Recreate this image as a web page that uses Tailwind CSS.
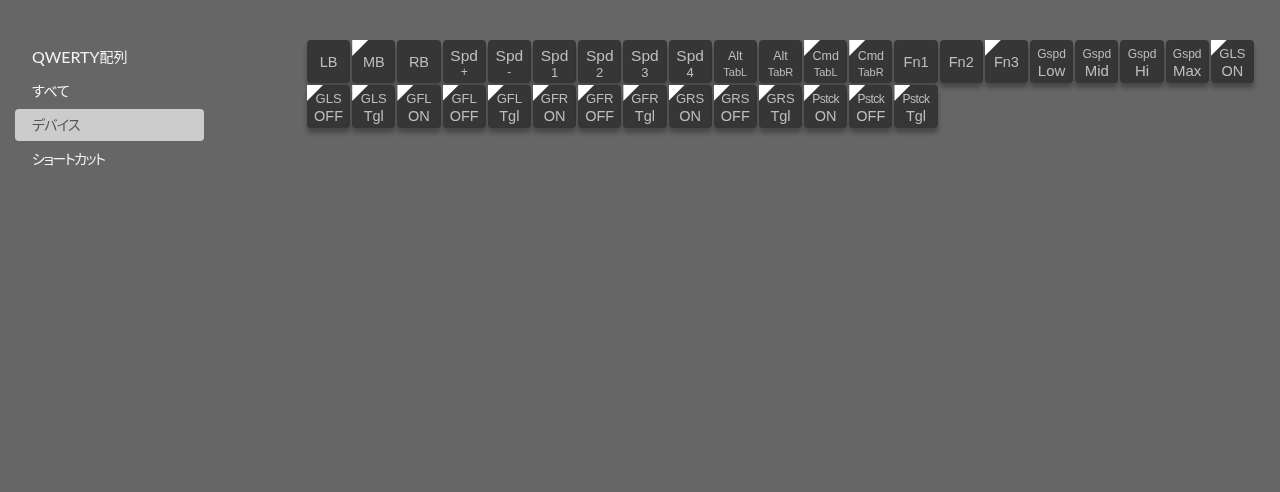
<!doctype html>
<html lang="ja"><head><meta charset="utf-8"><script src="https://cdn.jsdelivr.net/npm/@tailwindcss/browser@4"></script></head>
<body class="h-[492px] w-[1280px] overflow-hidden bg-[#666666] font-['Lato','Noto_Sans_CJK_JP',sans-serif]">
<div class="flex h-full">
<nav class="ml-[15px] mt-[41px] flex w-[188.5px] shrink-0 flex-col gap-[2px] text-[14px] leading-[20px] [font-feature-settings:'palt'] blur-[0.2px]">
<div class="flex h-[32px] items-center rounded-[4px] pl-[17px] text-[#f2f2f2]"><span class="text-[16px]">QWERTY</span>配列</div>
<div class="flex h-[32px] items-center rounded-[4px] pl-[17px] tracking-[-0.3px] text-[#f2f2f2]">すべて</div>
<div class="flex h-[32px] items-center rounded-[4px] bg-[#cccccc] pl-[17px] tracking-[-0.8px] text-[#555555]">デバイス</div>
<div class="flex h-[32px] items-center rounded-[4px] pl-[17px] tracking-[-1.45px] text-[#f2f2f2]">ショートカット</div>
</nav>
<main class="ml-[103.5px] mt-[40px] flex h-[90px] w-[960px] flex-wrap content-start gap-[2px] font-['Liberation_Sans',sans-serif] text-[#bdbdbd] blur-[0.4px] *:relative *:flex *:h-[43px] *:w-[43.2px] *:flex-col *:items-center *:justify-center *:rounded-[4px] *:bg-[#363636] *:pt-[3px] *:shadow-[0_5px_5px_rgba(0,0,0,0.3)]">
<div class="pb-[3px] text-[14.5px] leading-[16px]">LB</div>
<div class="pb-[3px] text-[14.5px] leading-[16px]"><i class="absolute left-0 top-0 size-[16px] bg-white [clip-path:polygon(0_0,100%_0,0_100%)]"></i>MB</div>
<div class="pb-[3px] text-[14.5px] leading-[16px]">RB</div>
<div><span class="text-[15.5px] leading-[18px]">Spd</span><span class="text-[12px] leading-[15px]">+</span></div>
<div><span class="text-[15.5px] leading-[18px]">Spd</span><span class="text-[12px] leading-[15px]">-</span></div>
<div><span class="text-[15.5px] leading-[18px]">Spd</span><span class="text-[13px] leading-[15px]">1</span></div>
<div><span class="text-[15.5px] leading-[18px]">Spd</span><span class="text-[13px] leading-[15px]">2</span></div>
<div><span class="text-[15.5px] leading-[18px]">Spd</span><span class="text-[13px] leading-[15px]">3</span></div>
<div><span class="text-[15.5px] leading-[18px]">Spd</span><span class="text-[13px] leading-[15px]">4</span></div>
<div><span class="text-[12.5px] leading-[18px]">Alt</span><span class="text-[11px] leading-[15px]">TabL</span></div>
<div><span class="text-[12.5px] leading-[18px]">Alt</span><span class="text-[11px] leading-[15px]">TabR</span></div>
<div><i class="absolute left-0 top-0 size-[16px] bg-white [clip-path:polygon(0_0,100%_0,0_100%)]"></i><span class="text-[12.5px] leading-[18px]">Cmd</span><span class="text-[11px] leading-[15px]">TabL</span></div>
<div><i class="absolute left-0 top-0 size-[16px] bg-white [clip-path:polygon(0_0,100%_0,0_100%)]"></i><span class="text-[12.5px] leading-[18px]">Cmd</span><span class="text-[11px] leading-[15px]">TabR</span></div>
<div class="pb-[3px] text-[14.5px] leading-[16px]">Fn1</div>
<div class="pb-[3px] text-[14.5px] leading-[16px]">Fn2</div>
<div class="pb-[3px] text-[14.5px] leading-[16px]"><i class="absolute left-0 top-0 size-[16px] bg-white [clip-path:polygon(0_0,100%_0,0_100%)]"></i>Fn3</div>
<div><span class="text-[12px] leading-[16px]">Gspd</span><span class="text-[15px] leading-[18px]">Low</span></div>
<div><span class="text-[12px] leading-[16px]">Gspd</span><span class="text-[15px] leading-[18px]">Mid</span></div>
<div><span class="text-[12px] leading-[16px]">Gspd</span><span class="text-[15px] leading-[18px]">Hi</span></div>
<div><span class="text-[12px] leading-[16px]">Gspd</span><span class="text-[15px] leading-[18px]">Max</span></div>
<div><i class="absolute left-0 top-0 size-[16px] bg-white [clip-path:polygon(0_0,100%_0,0_100%)]"></i><span class="text-[13px] leading-[16px]">GLS</span><span class="text-[14.5px] leading-[18px]">ON</span></div>
<div><i class="absolute left-0 top-0 size-[16px] bg-white [clip-path:polygon(0_0,100%_0,0_100%)]"></i><span class="text-[13px] leading-[16px]">GLS</span><span class="text-[14.5px] leading-[18px]">OFF</span></div>
<div><i class="absolute left-0 top-0 size-[16px] bg-white [clip-path:polygon(0_0,100%_0,0_100%)]"></i><span class="text-[13px] leading-[16px]">GLS</span><span class="text-[14.5px] leading-[18px]">Tgl</span></div>
<div><i class="absolute left-0 top-0 size-[16px] bg-white [clip-path:polygon(0_0,100%_0,0_100%)]"></i><span class="text-[13px] leading-[16px]">GFL</span><span class="text-[14.5px] leading-[18px]">ON</span></div>
<div><i class="absolute left-0 top-0 size-[16px] bg-white [clip-path:polygon(0_0,100%_0,0_100%)]"></i><span class="text-[13px] leading-[16px]">GFL</span><span class="text-[14.5px] leading-[18px]">OFF</span></div>
<div><i class="absolute left-0 top-0 size-[16px] bg-white [clip-path:polygon(0_0,100%_0,0_100%)]"></i><span class="text-[13px] leading-[16px]">GFL</span><span class="text-[14.5px] leading-[18px]">Tgl</span></div>
<div><i class="absolute left-0 top-0 size-[16px] bg-white [clip-path:polygon(0_0,100%_0,0_100%)]"></i><span class="text-[13px] leading-[16px]">GFR</span><span class="text-[14.5px] leading-[18px]">ON</span></div>
<div><i class="absolute left-0 top-0 size-[16px] bg-white [clip-path:polygon(0_0,100%_0,0_100%)]"></i><span class="text-[13px] leading-[16px]">GFR</span><span class="text-[14.5px] leading-[18px]">OFF</span></div>
<div><i class="absolute left-0 top-0 size-[16px] bg-white [clip-path:polygon(0_0,100%_0,0_100%)]"></i><span class="text-[13px] leading-[16px]">GFR</span><span class="text-[14.5px] leading-[18px]">Tgl</span></div>
<div><i class="absolute left-0 top-0 size-[16px] bg-white [clip-path:polygon(0_0,100%_0,0_100%)]"></i><span class="text-[13px] leading-[16px]">GRS</span><span class="text-[14.5px] leading-[18px]">ON</span></div>
<div><i class="absolute left-0 top-0 size-[16px] bg-white [clip-path:polygon(0_0,100%_0,0_100%)]"></i><span class="text-[13px] leading-[16px]">GRS</span><span class="text-[14.5px] leading-[18px]">OFF</span></div>
<div><i class="absolute left-0 top-0 size-[16px] bg-white [clip-path:polygon(0_0,100%_0,0_100%)]"></i><span class="text-[13px] leading-[16px]">GRS</span><span class="text-[14.5px] leading-[18px]">Tgl</span></div>
<div><i class="absolute left-0 top-0 size-[16px] bg-white [clip-path:polygon(0_0,100%_0,0_100%)]"></i><span class="text-[12px] leading-[16px] tracking-[-0.5px]">Pstck</span><span class="text-[14.5px] leading-[18px]">ON</span></div>
<div><i class="absolute left-0 top-0 size-[16px] bg-white [clip-path:polygon(0_0,100%_0,0_100%)]"></i><span class="text-[12px] leading-[16px] tracking-[-0.5px]">Pstck</span><span class="text-[14.5px] leading-[18px]">OFF</span></div>
<div><i class="absolute left-0 top-0 size-[16px] bg-white [clip-path:polygon(0_0,100%_0,0_100%)]"></i><span class="text-[12px] leading-[16px] tracking-[-0.5px]">Pstck</span><span class="text-[14.5px] leading-[18px]">Tgl</span></div>
</main>
</div>
</body></html>
